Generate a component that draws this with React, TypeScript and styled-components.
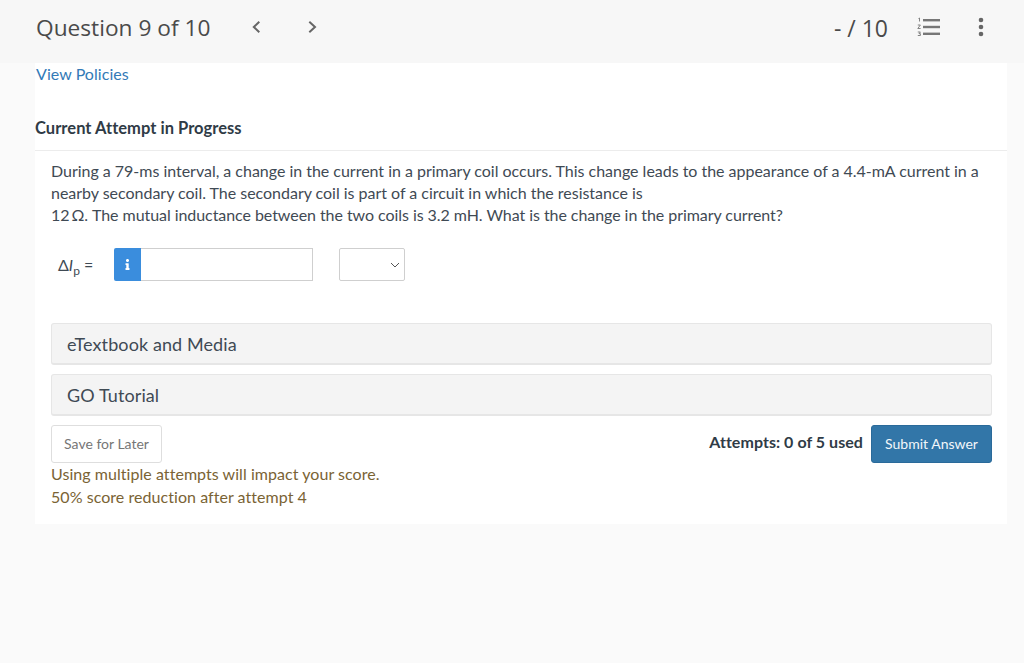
import styled, { createGlobalStyle } from 'styled-components';
import { FaInfo } from 'react-icons/fa';

const GlobalStyle = createGlobalStyle`
    html, body {
        margin: 0;
        padding: 0;
        height: 100%;
        background-color: #fafafa;
        font-family: Lato, "Liberation Sans", sans-serif;
    }
`;

const Page = styled.div`
    width: 1024px;
    height: 663px;
    overflow: hidden;
    background-color: #fafafa;
`;

const Header = styled.header`
    height: 63px;
    box-sizing: border-box;
    padding: 0 35px 9px 36px;
    display: flex;
    align-items: center;
    background-color: #f7f7f7;
    color: #4a4a4a;
`;

const HeaderTitle = styled.h1`
    margin: 0;
    padding-top: 1px;
    width: 211px;
    font-family: "Open Sans", sans-serif;
    font-size: 22.7px;
    font-weight: 400;
    white-space: nowrap;
`;

const NavButton = styled.span`
    display: flex;
    width: 16px;
    margin-right: 40px;
    margin-left: ${({ $first }: { $first?: boolean }) => ($first ? '2px' : '0')};
`;

const Score = styled.span`
    margin-left: auto;
    padding-top: 1px;
    font-family: "Open Sans", sans-serif;
    font-size: 23px;
    white-space: nowrap;
`;

const ListIcon = styled.svg`
    margin-left: 29px;
    width: 24px;
    height: 20px;
`;

const MoreIcon = styled.svg`
    margin-left: 36px;
    margin-right: 4px;
    width: 8px;
    height: 20px;
`;

const Card = styled.main`
    margin-left: 35px;
    width: 972px;
    height: 461px;
    box-sizing: border-box;
    background-color: white;
    color: #3f4a54;
`;

const PolicyLink = styled.a`
    display: block;
    padding-left: 1px;
    height: 21px;
    line-height: 21px;
    font-size: 16px;
    letter-spacing: 0.05px;
    color: #337ab7;
    text-decoration: none;
`;

const AttemptTitle = styled.h2`
    margin: 33px 0 0;
    height: 33px;
    line-height: 22px;
    font-size: 16.5px;
    font-weight: 700;
    letter-spacing: 0.03px;
    color: #2f3b46;
    border-bottom: 1px solid #ececec;
    box-sizing: content-box;
`;

const Body = styled.div`
    padding: 0 15px 0 16px;
`;

const Question = styled.p`
    margin: 9px 0 0;
    font-size: 16px;
    line-height: 22px;
    letter-spacing: -0.02px;
    color: #3f4a54;
`;

const QuestionEnd = styled.span`
    letter-spacing: -0.06px;
`;

const AnswerRow = styled.div`
    display: flex;
    align-items: center;
    margin-top: 22px;
    height: 33px;
`;

const Formula = styled.span`
    width: 63px;
    padding-left: 7px;
    box-sizing: border-box;
    font-size: 16px;
    color: #3f4a54;

    sub {
        font-size: 12px;
        line-height: 0;
    }
`;

const InfoBadge = styled.span`
    width: 27px;
    height: 33px;
    display: flex;
    align-items: center;
    justify-content: center;
    background-color: #3a8ddd;
    color: white;
    border-radius: 2px 0 0 2px;
    font-size: 11px;
`;

const ValueInput = styled.div`
    width: 172px;
    height: 33px;
    box-sizing: border-box;
    border: 1px solid #cfcfcf;
    border-left: none;
`;

const UnitSelect = styled.div`
    margin-left: 26px;
    width: 66px;
    height: 33px;
    box-sizing: border-box;
    border: 1px solid #cfcfcf;
    border-radius: 2px;
    display: flex;
    align-items: center;
    justify-content: flex-end;
    padding-right: 4px;
`;

const Panels = styled.div`
    margin-top: 42px;
    display: flex;
    flex-direction: column;
    gap: 9px;
`;

const Panel = styled.div`
    height: 42px;
    box-sizing: border-box;
    padding-left: 15px;
    display: flex;
    align-items: center;
    background-color: #f4f4f4;
    border: 1px solid #e6e6e6;
    border-bottom-width: 2px;
    border-radius: 3px;
    font-size: 18px;
    letter-spacing: 0.1px;
    color: #3f4a54;
`;

const Footer = styled.div`
    margin-top: 9px;
    display: flex;
    justify-content: space-between;
    align-items: flex-start;
`;

const SaveButton = styled.button`
    width: 111px;
    height: 38px;
    padding: 0 0 2px;
    background-color: white;
    border: 1px solid #dedede;
    border-radius: 3px;
    font-family: Lato, sans-serif;
    font-size: 14px;
    color: #767676;
`;

const Warning = styled.div`
    margin-top: -1px;
    font-size: 16px;
    line-height: 23px;
    letter-spacing: 0.05px;
    color: #7a6334;
`;

const SubmitGroup = styled.div`
    display: flex;
    align-items: flex-start;
    gap: 8px;
`;

const AttemptsText = styled.span`
    padding-top: 7px;
    font-size: 16px;
    line-height: 20px;
    font-weight: 700;
    letter-spacing: 0.05px;
    color: #2f3b46;
`;

const SubmitButton = styled.button`
    width: 121px;
    height: 38px;
    padding: 0 0 2px;
    background-color: #3276a8;
    border: 1px solid #2a6a9a;
    border-radius: 3px;
    font-family: Lato, sans-serif;
    font-size: 14px;
    color: #f2f6fa;
`;

function Chevron({ left }: { left?: boolean }) {
    return (
        <svg width="16" height="16" viewBox="0 0 16 16" fill="none" stroke="#666" strokeWidth="2">
            <path d={left ? 'M10.3 2.8 L4.8 8 L10.3 13.2' : 'M4.3 2.8 L10 8 L4.3 13.2'} />
        </svg>
    );
}

export default function App() {
    return (
        <Page>
            <GlobalStyle />
            <Header>
                <HeaderTitle>Question 9 of 10</HeaderTitle>
                <NavButton $first><Chevron left /></NavButton>
                <NavButton><Chevron /></NavButton>
                <Score>- / 10</Score>
                <ListIcon viewBox="0 0 24 20">
                    <rect x="6" y="2" width="17" height="2.4" fill="#777" />
                    <rect x="6" y="8.8" width="17" height="2.4" fill="#777" />
                    <rect x="6" y="15.6" width="17" height="2.4" fill="#777" />
                    <path d="M1.5 1.5 L2.5 1 V4.5 M0.8 8 H3.4 L0.8 11.5 H3.6 M0.8 15 H3.4 L2 16.6 H3.4 V18.5 H0.8" fill="none" stroke="#777" strokeWidth="0.9" />
                </ListIcon>
                <MoreIcon viewBox="0 0 8 20">
                    <circle cx="4" cy="3" r="2.3" fill="#666" />
                    <circle cx="4" cy="10" r="2.3" fill="#666" />
                    <circle cx="4" cy="17" r="2.3" fill="#666" />
                </MoreIcon>
            </Header>
            <Card>
                <PolicyLink href="#">View Policies</PolicyLink>
                <AttemptTitle>Current Attempt in Progress</AttemptTitle>
                <Body>
                    <Question>
                        During a 79-ms interval, a change in the current in a primary coil occurs. This change leads to the appearance of a 4.4-mA current in a nearby secondary coil. The secondary coil is part of a circuit in which the resistance is
                        <br />
                        <QuestionEnd>12&#8201;Ω. The mutual inductance between the two coils is 3.2 mH. What is the change in the primary current?</QuestionEnd>
                    </Question>
                    <AnswerRow>
                        <Formula>Δ<i>I</i><sub>p</sub> =</Formula>
                        <InfoBadge><FaInfo /></InfoBadge>
                        <ValueInput />
                        <UnitSelect>
                            <svg width="10" height="10" viewBox="0 0 10 10" fill="none" stroke="#555" strokeWidth="1">
                                <path d="M1 3 L5 7 L9 3" />
                            </svg>
                        </UnitSelect>
                    </AnswerRow>
                    <Panels>
                        <Panel>eTextbook and Media</Panel>
                        <Panel>GO Tutorial</Panel>
                    </Panels>
                    <Footer>
                        <SaveButton>Save for Later</SaveButton>
                        <SubmitGroup>
                            <AttemptsText>Attempts: 0 of 5 used</AttemptsText>
                            <SubmitButton>Submit Answer</SubmitButton>
                        </SubmitGroup>
                    </Footer>
                    <Warning>
                        Using multiple attempts will impact your score.
                        <br />
                        50% score reduction after attempt 4
                    </Warning>
                </Body>
            </Card>
        </Page>
    );
}
